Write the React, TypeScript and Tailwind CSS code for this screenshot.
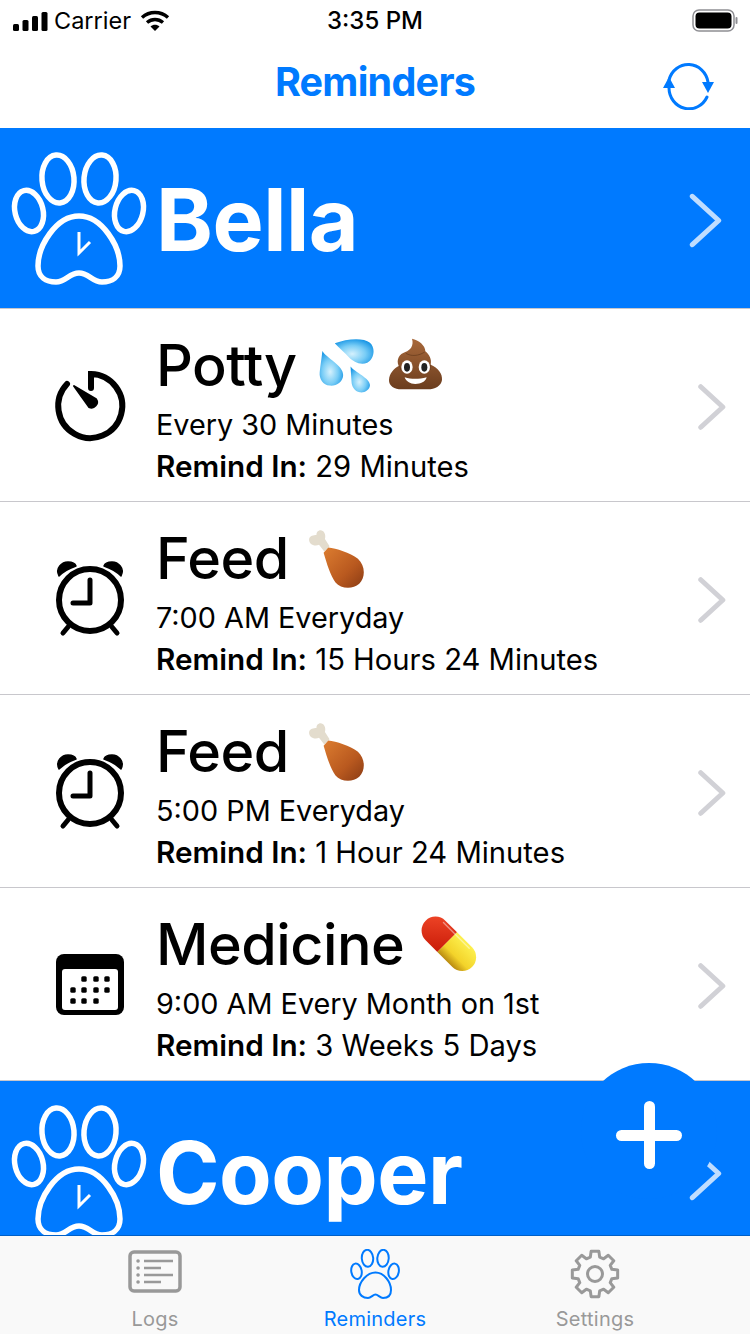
import React from "react";

const gearPath = (() => {
  const n = 8;
  const R = 23;
  const r = 17.5;
  const pts: string[] = [];
  for (let i = 0; i < n; i++) {
    const a = (i * 2 * Math.PI) / n - Math.PI / 2;
    const d1 = 0.17;
    const d2 = 0.27;
    const p = (rad: number, ang: number) => `${(25 + rad * Math.cos(ang)).toFixed(2)} ${(25 + rad * Math.sin(ang)).toFixed(2)}`;
    pts.push(p(r, a - d2), p(R, a - d1), p(R, a + d1), p(r, a + d2));
  }
  return `M${pts.join("L")}Z`;
})();

const Paw = () => (
  <svg width="160" height="160" viewBox="-1 -3 160 160" fill="none" stroke="#fff" strokeWidth="5.5" className="shrink-0">
    <ellipse cx="28" cy="80" rx="14" ry="21" transform="rotate(-14 28 80)" />
    <ellipse cx="57" cy="48" rx="16" ry="24" transform="rotate(-5 57 48)" />
    <ellipse cx="99" cy="48" rx="16" ry="24" transform="rotate(5 99 48)" />
    <ellipse cx="128" cy="80" rx="14" ry="21" transform="rotate(14 128 80)" />
    <path d="M78 85C55 85 37 115 37 135C37 146 45 151 55 151C65 151 68 142 78 142C88 142 91 151 101 151C111 151 119 146 119 135C119 115 101 85 78 85Z" />
    <path d="M78 101V122L89 111" strokeWidth={3} />
  </svg>
);

const Chevron = ({ color, h = 56, sw = 5 }: { color: string; h?: number; sw?: number }) => (
  <svg width={h * 0.6} height={h} viewBox="0 0 30 50" fill="none" stroke={color} strokeWidth={sw * (50 / h)} strokeLinecap="round" strokeLinejoin="round" className="shrink-0">
    <path d="M3 3L27 25L3 47" />
  </svg>
);

const TimerIcon = () => (
  <svg width="80" height="80" viewBox="-1 -1 80 80" className="shrink-0">
    <path d="M40 22V8A32 32 0 1 1 16 18" fill="none" stroke="#000" strokeWidth="6" strokeLinecap="round" />
    <path d="M23 20L45 33a5.500 5.500 0 0 1-7 8Z" fill="#000" stroke="#000" strokeWidth="2" strokeLinejoin="round" />
  </svg>
);

const AlarmIcon = () => (
  <svg width="80" height="80" viewBox="0 -2 80 80" className="shrink-0">
    <circle cx="40" cy="40" r="31" fill="none" stroke="#000" strokeWidth="6" />
    <path d="M40 20V43H23" fill="none" stroke="#000" strokeWidth="5" strokeLinecap="round" strokeLinejoin="round" />
    <path d="M9 16C5 8 12 2 18 2C22 2 25 3 26 6C20 8 14 11 9 16Z" fill="#000" stroke="#000" strokeWidth="1.500" strokeLinejoin="round" />
    <path d="M71 16C75 8 68 2 62 2C58 2 55 3 54 6C60 8 66 11 71 16Z" fill="#000" stroke="#000" strokeWidth="1.500" strokeLinejoin="round" />
    <path d="M13 73L18 67M67 73L62 67" stroke="#000" strokeWidth="5" strokeLinecap="round" />
  </svg>
);

const CalendarIcon = () => {
  const dots = [
    [84, 979], [96, 979], [107, 979],
    [73, 990], [84, 990], [96, 990], [107, 990],
    [73, 1001], [84, 1001], [96, 1001],
  ];
  return (
    <svg width="80" height="80" viewBox="50 944 80 80" className="shrink-0">
      <rect x="56" y="954" width="68" height="61" rx="8" fill="#000" />
      <rect x="62" y="969" width="56" height="41" rx="3" fill="#fff" />
      {dots.map(([x, y]) => (
        <rect key={`${x}-${y}`} x={x - 2.7} y={y - 2.7} width="5.400" height="5.400" rx="1.500" fill="#000" />
      ))}
    </svg>
  );
};

const Drops = () => (
  <svg width="57" height="57" viewBox="55 25 170 170" className="shrink-0">
    <defs>
      <radialGradient id="dg" cx="0.45" cy="0.6" r="0.62">
        <stop offset="0" stopColor="#d5f1fd" />
        <stop offset="0.55" stopColor="#79cdf6" />
        <stop offset="1" stopColor="#1c98e6" />
      </radialGradient>
    </defs>
    <path d="M105 44C140 30 190 26 210 42C228 58 222 92 202 102C180 110 160 98 148 86C134 72 118 58 105 44Z" fill="url(#dg)" />
    <path d="M68 67C80 88 130 110 130 138C130 158 110 172 90 170C70 168 58 150 60 130C62 110 66 88 68 67Z" fill="url(#dg)" />
    <path d="M152 113C165 130 210 148 210 168C210 182 194 192 180 190C164 188 155 172 155 158C154 142 153 128 152 113Z" fill="url(#dg)" />
  </svg>
);

const Poop = () => (
  <svg width="55" height="55" viewBox="260 25 165 165" className="shrink-0">
    <defs>
      <linearGradient id="pg" x1="0" y1="0" x2="0" y2="1">
        <stop offset="0" stopColor="#a8683a" />
        <stop offset="1" stopColor="#6b3d1e" />
      </linearGradient>
    </defs>
    <path d="M332 30C352 34 372 50 372 68C384 78 392 92 388 108C410 118 424 134 422 154C420 172 400 182 380 182H300C280 182 262 172 263 154C264 134 278 120 292 112C284 92 294 76 312 70C328 64 338 50 332 30Z" fill="url(#pg)" />
    <path d="M314 74C330 84 352 82 370 70M294 112C300 122 296 124 300 124M388 108C384 118 388 122 386 124" fill="none" stroke="#5f3518" strokeWidth="3" strokeOpacity="0.6" />
    <ellipse cx="317" cy="115" rx="17" ry="20" fill="#fff" />
    <ellipse cx="369" cy="115" rx="17" ry="20" fill="#fff" />
    <ellipse cx="317" cy="116" rx="9" ry="13" fill="#222" />
    <ellipse cx="369" cy="116" rx="9" ry="13" fill="#222" />
    <path d="M310 146C330 152 352 152 376 146C372 160 358 166 342 166C326 166 314 158 310 146Z" fill="#fff" />
  </svg>
);

const Drumstick = () => (
  <svg width="58" height="61" viewBox="20 585 175 185" className="shrink-0">
    <defs>
      <linearGradient id="mg" x1="0" y1="0" x2="1" y2="1">
        <stop offset="0" stopColor="#dc7d30" />
        <stop offset="0.6" stopColor="#b9591f" />
        <stop offset="1" stopColor="#8a3b14" />
      </linearGradient>
    </defs>
    <path d="M58 592C70 590 78 604 74 618L88 640L72 656L56 636C40 642 24 632 26 618C28 608 40 606 48 606C48 598 52 594 58 592Z" fill="#e3dccd" />
    <path d="M84 644C108 646 150 660 174 678C196 698 198 734 178 754C158 772 122 770 106 750C90 728 80 694 70 660Z" fill="url(#mg)" />
  </svg>
);

const Pill = () => (
  <svg width="58" height="58" viewBox="65 40 175 175" className="shrink-0">
    <defs>
      <linearGradient id="rg" x1="0" y1="0" x2="1" y2="1">
        <stop offset="0" stopColor="#f2492a" />
        <stop offset="1" stopColor="#c91b08" />
      </linearGradient>
      <linearGradient id="yg" x1="0" y1="0" x2="0" y2="1">
        <stop offset="0" stopColor="#fdf04e" />
        <stop offset="0.65" stopColor="#f3d32a" />
        <stop offset="1" stopColor="#b98a10" />
      </linearGradient>
    </defs>
    <g transform="rotate(45 152 127)">
      <path d="M145 85H95A42 42 0 0 0 95 169H145Z" fill="url(#rg)" />
      <path d="M145 85H209A42 42 0 0 1 209 169H145Z" fill="url(#yg)" />
      <path d="M95 93H205" stroke="#fff" strokeOpacity="0.45" strokeWidth="4" strokeLinecap="round" />
    </g>
  </svg>
);

const Row = ({ icon, title, emoji, sub, remind, gapClass }: { icon: React.ReactNode; title: string; emoji: React.ReactNode; sub: string; remind: string; gapClass: string }) => (
  <div className="flex h-[193px] items-center border-b border-[#c8c7cc] bg-white pl-[50px] pr-[24px]">
    <div className="flex w-[106px] shrink-0">{icon}</div>
    <div className="flex-1 pt-[6px]">
      <div className={`flex h-[72px] items-center text-[57.5px] font-medium leading-[72px] tracking-[-0.5px] text-black ${gapClass}`}>
        <span>{title}</span>
        <span className="flex gap-[13px]">{emoji}</span>
      </div>
      <div className="mt-[3px] h-[41px] text-[28.8px] leading-[42px] text-black">{sub}</div>
      <div className="h-[42px] text-[29.2px] leading-[42px] text-black">
        <span className="text-[29.7px] font-semibold">Remind In:</span> {remind}
      </div>
    </div>
    <div className="pt-[4px]">
      <Chevron color="#d1d1d6" h={46} sw={5} />
    </div>
  </div>
);

const Section = ({ name, className }: { name: string; className: string }) => (
  <div className={`flex items-start overflow-hidden bg-[#007aff] pr-[28px] ${className}`}>
    <div className="w-[156px] shrink-0">
      <Paw />
    </div>
    <div className="flex-1 pt-[41px] text-[86px] font-bold leading-[102px] tracking-[-0.5px] text-white">{name}</div>
    <div className="pt-[65px]">
      <Chevron color="rgba(255,255,255,0.75)" h={55} sw={5} />
    </div>
  </div>
);

export default function App() {
  return (
    <div className="relative flex h-[1334px] w-[750px] flex-col overflow-hidden bg-white font-['Inter','Liberation_Sans',sans-serif]">
      {/* status bar */}
      <div className="relative flex h-[40px] items-center justify-between pl-[13px] pr-[12px] pt-[1px] text-black">
        <div className="flex items-center gap-[6px]">
          <svg width="35" height="20" viewBox="0 0 35 20">
            <rect x="0" y="13" width="6" height="7" rx="1.500" />
            <rect x="9.500" y="9" width="6" height="11" rx="1.500" />
            <rect x="19" y="5" width="6" height="15" rx="1.500" />
            <rect x="28.500" y="1" width="6" height="19" rx="1.500" />
          </svg>
          <span className="text-[23.5px] leading-[28px]">Carrier</span>
          <svg width="30" height="22" viewBox="0 0 30 22" fill="none" stroke="#000" strokeWidth="3.400" className="ml-[3px]">
            <path d="M2 7.500C9.500 .8 20.500 .8 28 7.500" />
            <path d="M7 12.500C11.800 8.400 18.200 8.400 23 12.500" />
            <path d="M15 21L10.500 16.500C13 14.200 17 14.200 19.500 16.500Z" fill="#000" stroke="none" />
          </svg>
        </div>
        <span className="absolute left-1/2 -translate-x-1/2 text-[24px] font-medium leading-[28px]">3:35 PM</span>
        <svg width="46" height="24" viewBox="0 0 46 24">
          <rect x="1" y="1" width="41" height="21" rx="6" fill="none" stroke="#8e8e93" strokeWidth="1.500" />
          <rect x="3.500" y="3.500" width="36" height="16" rx="4" fill="#000" />
          <rect x="43.500" y="8" width="2" height="7" rx="1" fill="#8e8e93" />
        </svg>
      </div>
      {/* nav bar */}
      <div className="relative flex h-[88px] items-center justify-center pb-[4px]">
        <span className="text-[39.5px] font-bold leading-[44px] tracking-[-0.75px] text-[#007aff]">Reminders</span>
        <svg width="56" height="50" viewBox="0 0 56 50" fill="none" stroke="#007aff" strokeWidth="3" strokeLinecap="round" className="absolute right-[34px] top-[20px]">
          <path d="M9 20A20 21 0 0 1 48 22" />
          <path d="M47 37A20 21 0 0 1 9 28" />
          <path d="M9 17L15 28H3Z" fill="#007aff" stroke="none" />
          <path d="M42 22H54L48 33Z" fill="#007aff" stroke="none" />
        </svg>
      </div>
      <Section name="Bella" className="h-[181px] border-b border-[#c8c7cc]" />
      <Row icon={<TimerIcon />} title="Potty" gapClass="gap-[21px]" emoji={<><Drops /><Poop /></>} sub="Every 30 Minutes" remind="29 Minutes" />
      <Row icon={<AlarmIcon />} title="Feed" gapClass="gap-[18px]" emoji={<Drumstick />} sub="7:00 AM Everyday" remind="15 Hours 24 Minutes" />
      <Row icon={<AlarmIcon />} title="Feed" gapClass="gap-[18px]" emoji={<Drumstick />} sub="5:00 PM Everyday" remind="1 Hour 24 Minutes" />
      <Row icon={<CalendarIcon />} title="Medicine" gapClass="gap-[16px]" emoji={<Pill />} sub="9:00 AM Every Month on 1st" remind="3 Weeks 5 Days" />
      <Section name="Cooper" className="h-[155px] border-b border-[#0060c8]" />
      {/* tab bar */}
      <div className="flex flex-1 justify-center bg-[#f9f9f9] text-[20px] leading-[24px] tracking-[0.25px]">
        <div className="flex w-[220px] flex-col items-center pt-[14px] text-[#999]">
          <svg width="54" height="44" viewBox="0 0 54 44" fill="none" stroke="#999">
            <rect x="2" y="2" width="50" height="39" rx="4" strokeWidth="3.500" />
            <path d="M16 11H45M16 18H33M16 25H45M16 32H33" strokeWidth="2.500" />
            <path d="M10 11h.1M10 18h.1M10 25h.1M10 32h.1" strokeWidth="3.500" strokeLinecap="round" />
          </svg>
          <span className="mt-[13px]">Logs</span>
        </div>
        <div className="flex w-[220px] flex-col items-center pt-[13px] text-[#007aff]">
          <svg width="50" height="50" viewBox="0 0 50 50" fill="none" stroke="#007aff" strokeWidth="2">
            <ellipse cx="6.500" cy="22.300" rx="5.200" ry="7.800" transform="rotate(-10 6.500 22.300)" />
            <ellipse cx="17.500" cy="9.300" rx="5.700" ry="8.500" transform="rotate(-4 17.500 9.300)" />
            <ellipse cx="33" cy="9.300" rx="5.700" ry="8.500" transform="rotate(4 33 9.300)" />
            <ellipse cx="43.600" cy="22.300" rx="5.200" ry="7.800" transform="rotate(10 43.600 22.300)" />
            <path d="M25.500 23.500C17 23.500 9 33 9 41C9 46 13 49 18 49C21 49 23 45.500 25.500 45.500C28 45.500 30 49 33 49C38 49 41 46 41 41C41 33 34 23.500 25.500 23.500Z" />
          </svg>
          <span className="mt-[8px]">Reminders</span>
        </div>
        <div className="flex w-[220px] flex-col items-center pt-[13px] text-[#999]">
          <svg width="50" height="50" viewBox="0 0 50 50" fill="none" stroke="#999" strokeWidth="3" strokeLinejoin="round">
            <path d={gearPath} />
            <circle cx="25" cy="25" r="7.500" />
          </svg>
          <span className="mt-[8px]">Settings</span>
        </div>
      </div>
      {/* floating add button */}
      <div className="absolute left-[581px] top-[1063px] flex h-[136px] w-[136px] items-center justify-center rounded-full bg-[#007aff]">
        <div className="relative mt-[8px] h-[68px] w-[66px]">
          <div className="absolute left-[28px] top-0 h-[68px] w-[11px] rounded-full bg-white" />
          <div className="absolute left-0 top-[29px] h-[11px] w-[66px] rounded-full bg-white" />
        </div>
      </div>
    </div>
  );
}
